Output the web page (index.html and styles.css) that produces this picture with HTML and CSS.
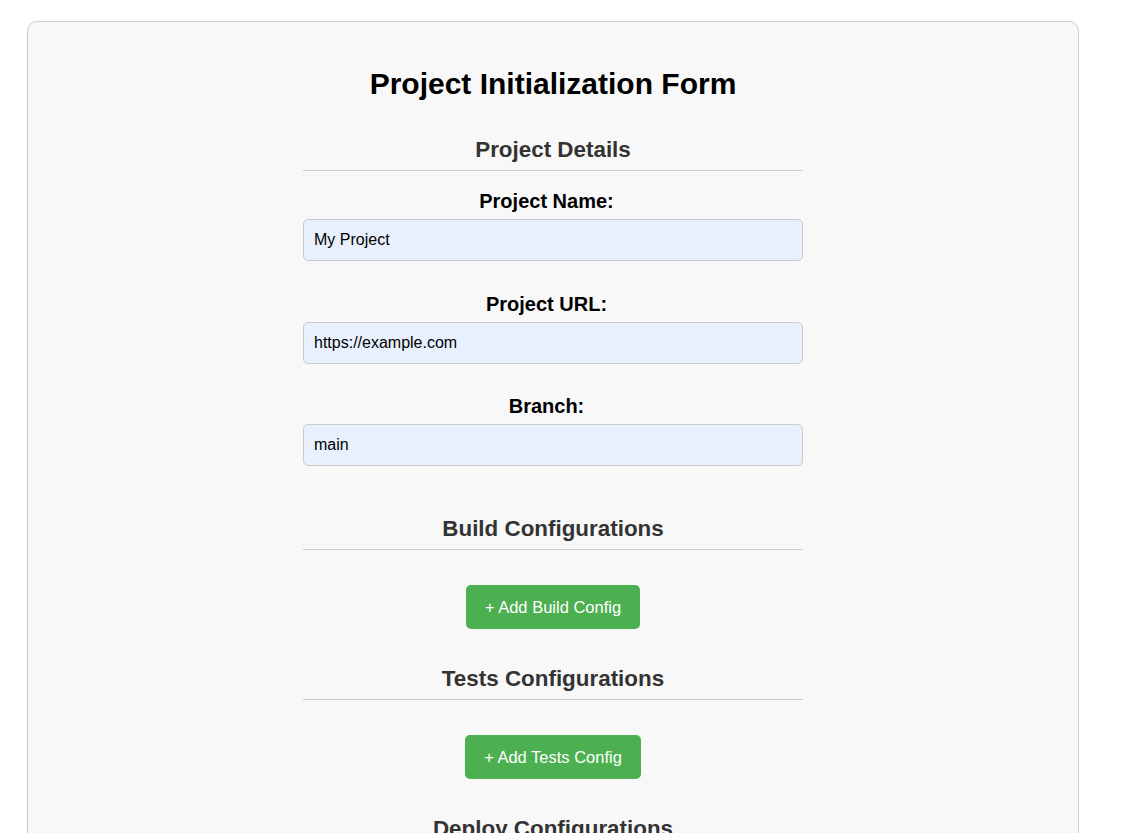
FILE: index.html
```html
<!DOCTYPE html>
<html lang="en">
<head>
<meta charset="utf-8">
<title>Project Initialization Form</title>
<link rel="stylesheet" href="styles.css">
</head>
<body>
<div class="container">
  <h1 class="title">Project Initialization Form</h1>
  <form class="form">
    <section class="section">
      <h2 class="section-title">Project Details</h2>
      <div class="field">
        <label class="label" for="name">Project Name:</label>
        <input class="input" id="name" type="text" value="My Project">
      </div>
      <div class="field">
        <label class="label" for="url">Project URL:</label>
        <input class="input" id="url" type="text" value="https://example.com">
      </div>
      <div class="field">
        <label class="label" for="branch">Branch:</label>
        <input class="input" id="branch" type="text" value="main">
      </div>
    </section>
    <section class="section">
      <h2 class="section-title">Build Configurations</h2>
      <button type="button" class="add-btn">+ Add Build Config</button>
    </section>
    <section class="section">
      <h2 class="section-title">Tests Configurations</h2>
      <button type="button" class="add-btn">+ Add Tests Config</button>
    </section>
    <section class="section">
      <h2 class="section-title">Deploy Configurations</h2>
      <button type="button" class="add-btn">+ Add Deploy Config</button>
    </section>
  </form>
</div>
</body>
</html>
```
FILE: styles.css
```css
html, body {
  margin: 0;
  padding: 0;
  background: #ffffff;
}
body {
  font-family: "Liberation Sans", Arial, sans-serif;
  color: #000;
  padding: 21px 58px 40px 27px;
}
.container {
  background: #f8f8f8;
  border: 1px solid #cccccc;
  border-radius: 10px;
  padding: 20px;
  display: flex;
  flex-direction: column;
  align-items: center;
}
.title {
  font-size: 30px;
  font-weight: bold;
  margin: 25px 0 36px;
  text-align: center;
}
.form {
  width: 500px;
  display: flex;
  flex-direction: column;
}
.section {
  display: flex;
  flex-direction: column;
  align-items: center;
  margin-bottom: 37px;
}
.section-title {
  align-self: stretch;
  text-align: center;
  font-size: 22.4px;
  color: #333;
  margin: 0 0 19px;
  padding-bottom: 7px;
  border-bottom: 1px solid #cccccc;
}
.section .add-btn {
  margin-top: 16px;
}
.field {
  align-self: stretch;
  display: flex;
  flex-direction: column;
  align-items: center;
  margin-bottom: 31.5px;
}
.field:last-child {
  margin-bottom: 13px;
}
.label {
  font-weight: bold;
  font-size: 20px;
  margin-bottom: 6px;
  padding-right: 13px;
}
.input {
  box-sizing: border-box;
  width: 100%;
  height: 42px;
  padding: 10px;
  font-family: "Liberation Sans", Arial, sans-serif;
  font-size: 16px;
  color: #000;
  background: #e8f0fe;
  border: 1px solid #cccccc;
  border-radius: 5px;
}
.add-btn {
  background: #4caf50;
  color: #fff;
  border: none;
  border-radius: 5px;
  padding: 12px 19px;
  line-height: 20px;
  font-family: "Liberation Sans", Arial, sans-serif;
  font-size: 16.5px;
  cursor: pointer;
}
```
